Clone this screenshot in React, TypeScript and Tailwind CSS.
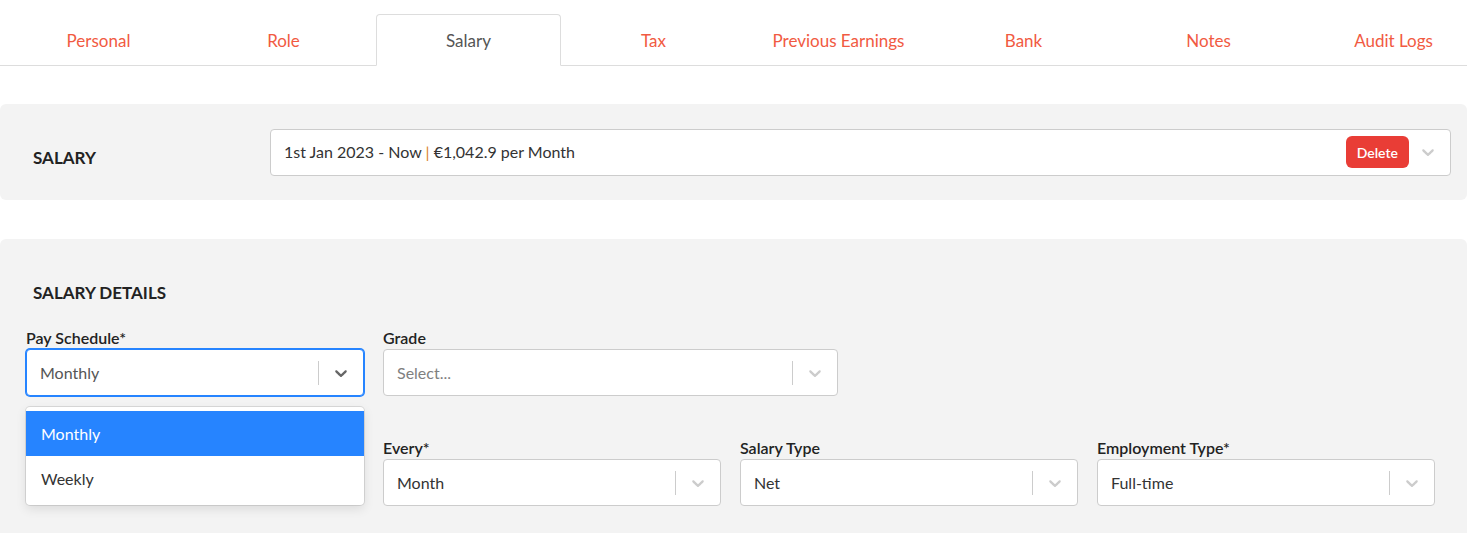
import React from "react";

const tabs = ["Personal", "Role", "Salary", "Tax", "Previous Earnings", "Bank", "Notes", "Audit Logs"];

function Chevron({ dark }: { dark?: boolean }) {
  return (
    <svg viewBox="0 0 20 20" className={`h-5 w-5 ${dark ? "fill-[#666666]" : "fill-[#cccccc]"}`}>
      <path d="M4.516 7.548c0.436-0.446 1.043-0.481 1.576 0l3.908 3.747 3.908-3.747c0.533-0.481 1.141-0.446 1.574 0 0.436 0.445 0.408 1.197 0 1.615-0.406 0.418-4.695 4.502-4.695 4.502-0.217 0.223-0.502 0.335-0.787 0.335s-0.57-0.112-0.789-0.335c0 0-4.287-4.084-4.695-4.502s-0.436-1.17 0-1.615z" />
    </svg>
  );
}

function Select({
  value,
  placeholder,
  focused,
}: {
  value?: string;
  placeholder?: string;
  focused?: boolean;
}) {
  return (
    <div
      className={`flex h-[47px] items-center rounded-[4px] border bg-white ${
        focused ? "border-[#2684ff] ring-1 ring-[#2684ff]" : "border-[#cccccc]"
      }`}
    >
      <div className="flex-1 truncate pl-[13px] text-[16px]">
        {value ? (
          <span className={focused ? "text-[#555555]" : "text-[#333333]"}>{value}</span>
        ) : (
          <span className="text-[#808080]">{placeholder}</span>
        )}
      </div>
      <span className="h-6 w-px bg-[#cccccc]" />
      <div className="px-[12px]">
        <Chevron dark={focused} />
      </div>
    </div>
  );
}

function Field({ label, children }: { label: string; children: React.ReactNode }) {
  return (
    <div>
      <div className="mb-[1px] text-[16px] font-semibold leading-5 text-[#222222]">{label}</div>
      {children}
    </div>
  );
}

export default function App() {
  return (
    <div className="min-h-screen overflow-hidden bg-white font-['Lato',sans-serif]">
      <nav className="flex border-b border-[#dddddd] pl-[6px] pt-[14px]">
        {tabs.map((t) => {
          const active = t === "Salary";
          return (
            <div
              key={t}
              className={`-mb-px flex h-[52px] w-[185px] shrink-0 items-center justify-center rounded-t-[4px] border pt-[2px] text-[17px] ${
                active
                  ? "border-[#dddddd] border-b-white bg-white text-[#555555]"
                  : "border-transparent text-[#f15a42]"
              }`}
            >
              {t}
            </div>
          );
        })}
      </nav>

      <section className="mt-[38px] flex h-[96px] items-center rounded-md bg-[#f3f3f3]">
        <h2 className="mt-3 w-[270px] shrink-0 pl-[33px] text-[17px] font-bold text-[#222222]">SALARY</h2>
        <div className="mr-[16px] flex h-[47px] flex-1 items-center rounded-[4px] border border-[#cccccc] bg-white">
          <div className="flex-1 pl-[13px] text-[16px] text-[#333333]">
            1st Jan 2023 - Now <span className="text-[#d9822b]">|</span> €1,042.9 per Month
          </div>
          <button className="h-8 rounded-[6px] bg-[#e93d36] px-[11px] text-[14px] font-semibold text-white">
            Delete
          </button>
          <div className="pl-[9px] pr-[12px]">
            <Chevron />
          </div>
        </div>
      </section>

      <section className="mt-[39px] rounded-md bg-[#f3f3f3] px-[26px] pb-10 pt-[44px]">
        <h2 className="pl-[7px] text-[17px] font-bold leading-5 text-[#222222]">SALARY DETAILS</h2>

        <div className="relative">
          <div className="mt-[25px] flex gap-[19px]">
            <div className="w-[338px]">
              <Field label="Pay Schedule*">
                <Select value="Monthly" focused />
              </Field>
            </div>
            <div className="w-[455px]">
              <Field label="Grade">
                <Select placeholder="Select..." />
              </Field>
            </div>
          </div>

          <div className="mt-[42px] grid grid-cols-[repeat(4,338px)] gap-x-[19px]">
            <div />
            <Field label="Every*">
              <Select value="Month" />
            </Field>
            <Field label="Salary Type">
              <Select value="Net" />
            </Field>
            <Field label="Employment Type*">
              <Select value="Full-time" />
            </Field>
          </div>

          <div className="absolute left-0 top-[79px] z-10 w-[338px] rounded-[4px] bg-white py-1 shadow-[0_0_0_1px_rgba(0,0,0,0.1),0_4px_11px_rgba(0,0,0,0.1)]">
            <div className="bg-[#2684ff] px-[15px] py-[12px] text-[16px] leading-[21px] text-white">Monthly</div>
            <div className="px-[15px] py-[12px] text-[16px] leading-[21px] text-[#333333]">Weekly</div>
          </div>
        </div>
      </section>
    </div>
  );
}
